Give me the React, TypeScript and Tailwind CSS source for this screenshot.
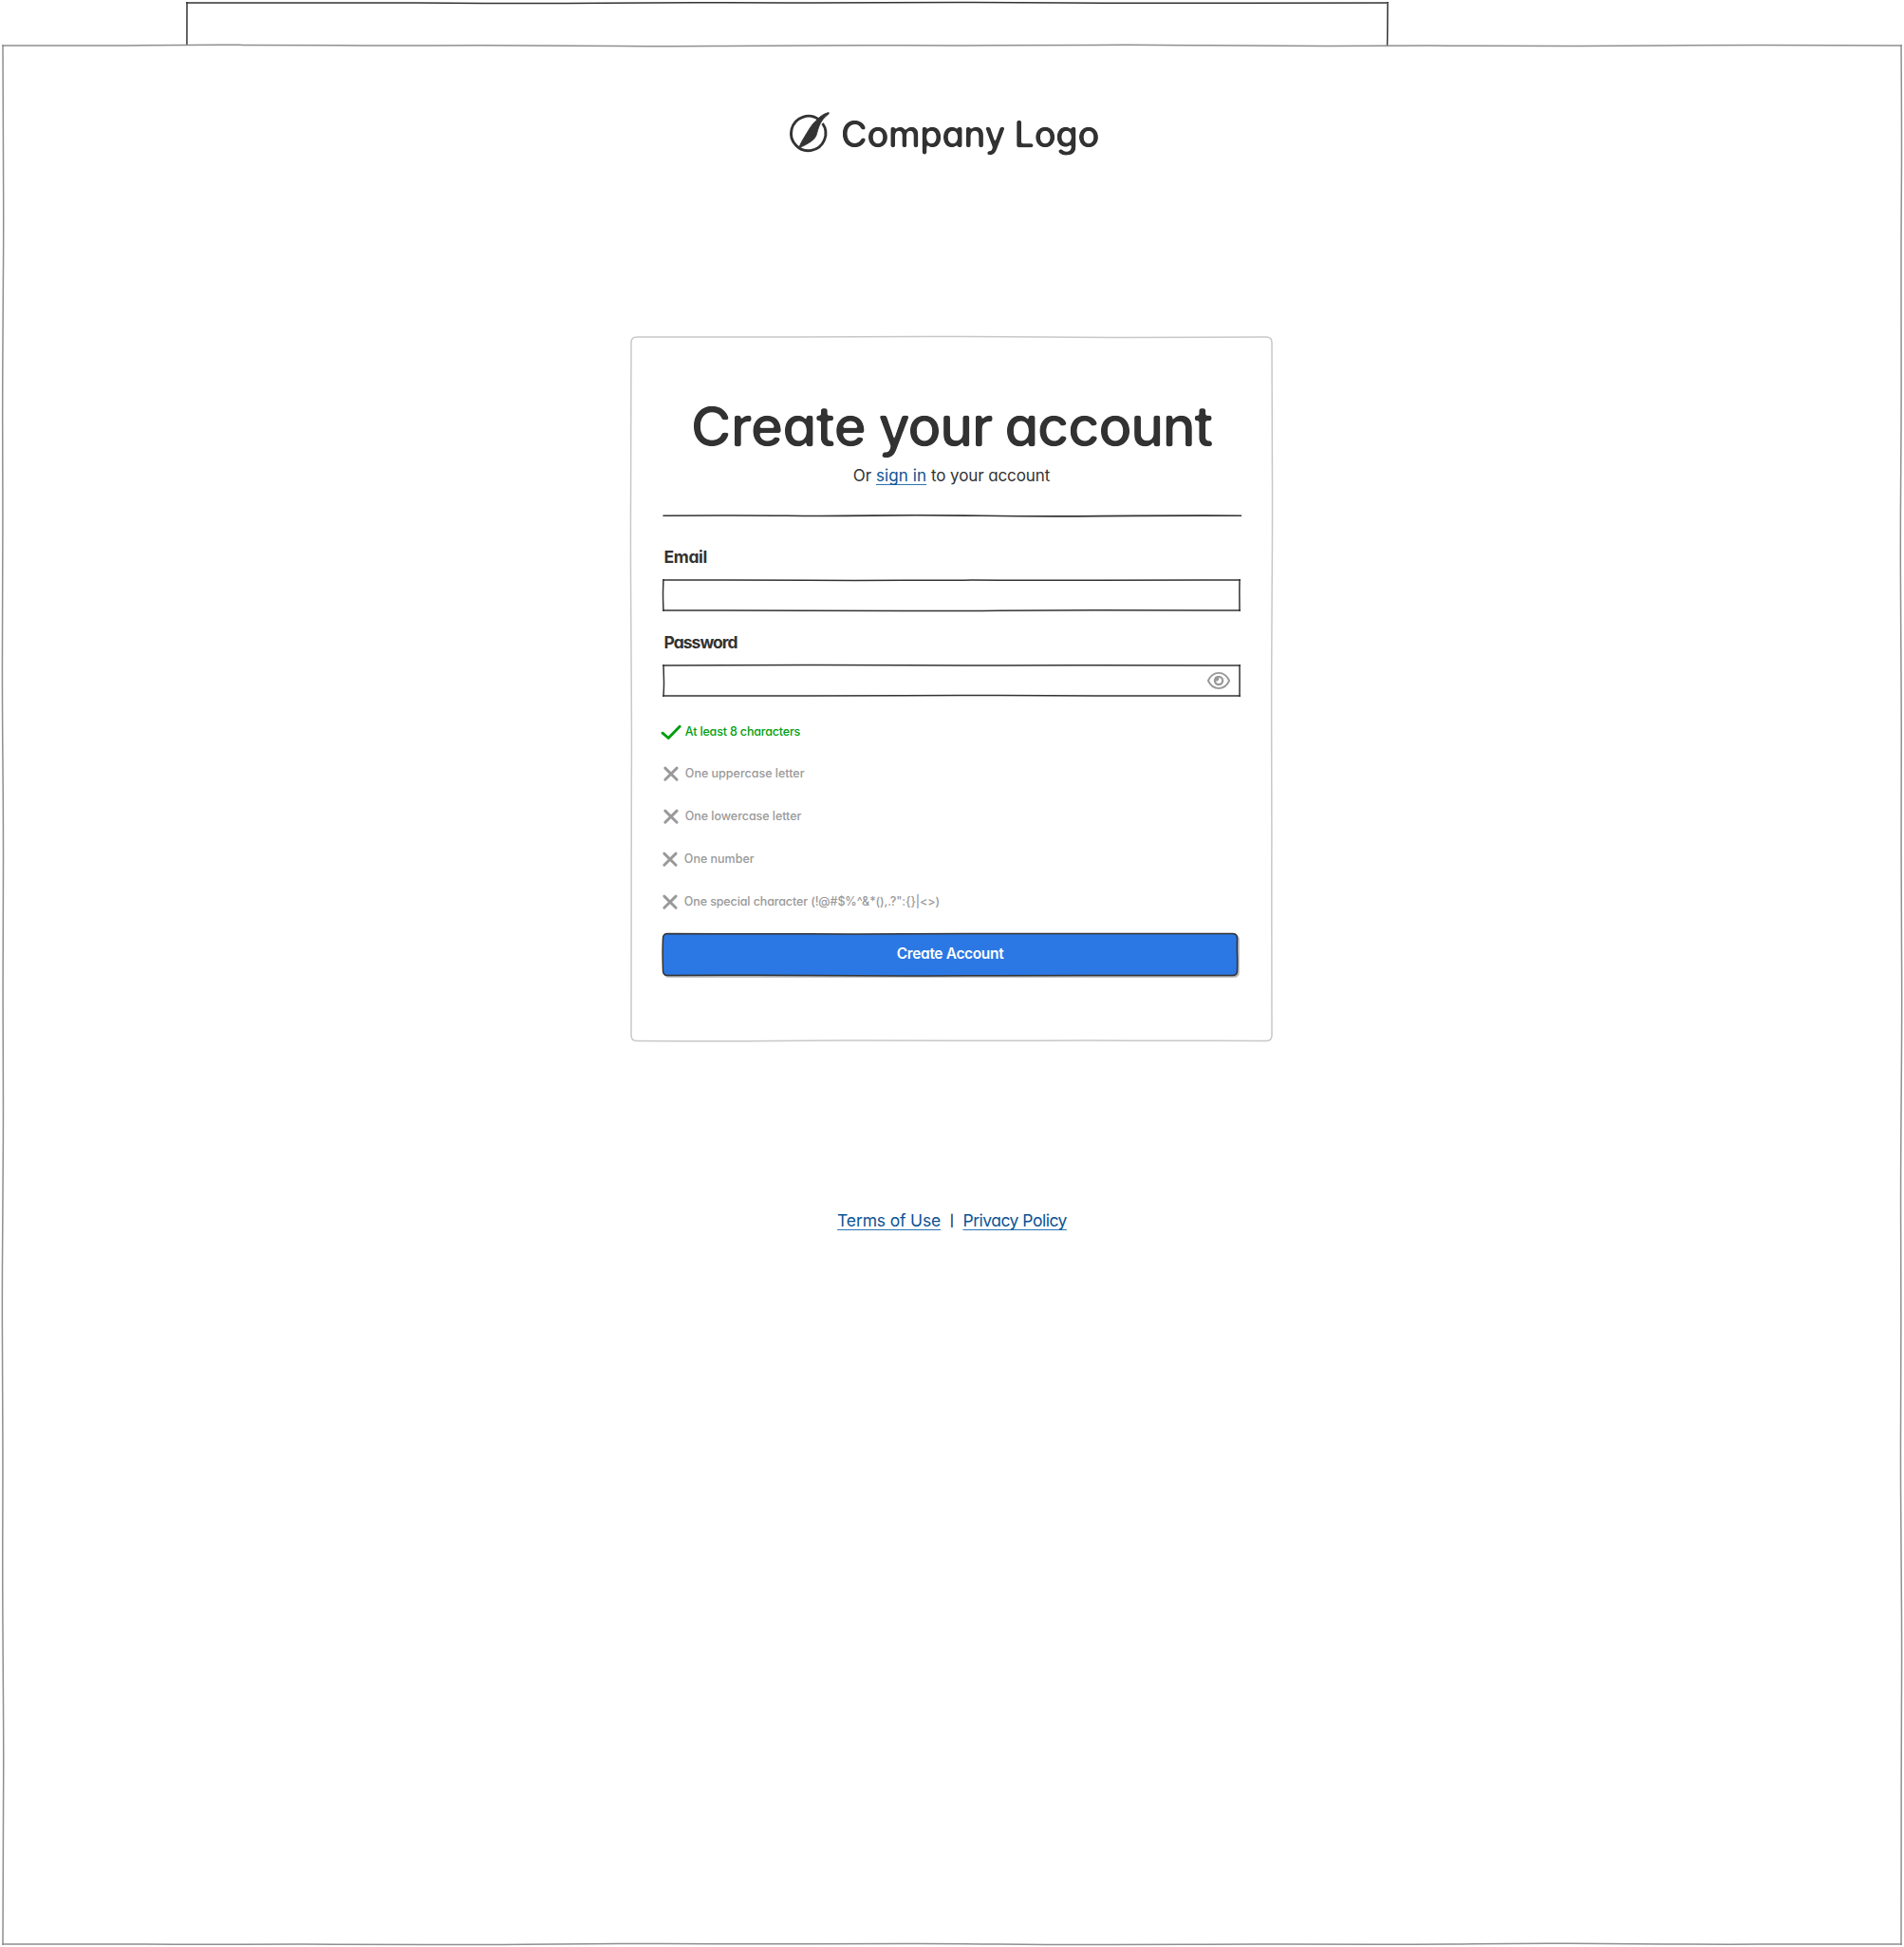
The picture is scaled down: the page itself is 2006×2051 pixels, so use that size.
import type { ReactNode } from "react";

type Point = [number, number];

/** Smooth curve through a list of points. */
function curve(points: Point[], move = true): string {
  let d = move ? `M${points[0][0]} ${points[0][1]}` : `L${points[0][0]} ${points[0][1]}`;
  for (let i = 1; i < points.length - 1; i++) {
    const [x, y] = points[i];
    const [nx, ny] = points[i + 1];
    const last = i === points.length - 2;
    const ex = last ? nx : (x + nx) / 2;
    const ey = last ? ny : (y + ny) / 2;
    d += ` Q${x.toFixed(2)} ${y.toFixed(2)} ${ex.toFixed(2)} ${ey.toFixed(2)}`;
  }
  return d;
}

/** Points of one pen stroke that drifts slightly off the straight line. */
function stroke(from: Point, to: Point, seed: number, amp: number): Point[] {
  const length = Math.hypot(to[0] - from[0], to[1] - from[1]);
  const steps = Math.max(3, Math.round(length / 100));
  const nx = -(to[1] - from[1]) / length;
  const ny = (to[0] - from[0]) / length;
  const points: Point[] = [];
  for (let i = 0; i <= steps; i++) {
    const t = i / steps;
    const ends = i === 0 || i === steps;
    const off = ends ? 0 : amp * Math.sin(seed * 2.3 + i * 1.35) * Math.cos(seed + i * 0.6);
    points.push([from[0] + (to[0] - from[0]) * t + nx * off, from[1] + (to[1] - from[1]) * t + ny * off]);
  }
  return points;
}

function SketchBox({
  width,
  height,
  seed,
  radius = 0,
  amp = 0.9,
  over = 1,
  fill = "none",
  className,
}: {
  width: number;
  height: number;
  seed: number;
  radius?: number;
  amp?: number;
  over?: number;
  fill?: string;
  className: string;
}) {
  const w = width;
  const h = height;
  const r = radius;
  let d: string;
  if (r > 0) {
    d =
      curve(stroke([r, 0], [w - r, 0], seed, amp)) +
      ` Q${w} 0 ${w} ${r} ` +
      curve(stroke([w, r], [w, h - r], seed + 1, amp), false) +
      ` Q${w} ${h} ${w - r} ${h} ` +
      curve(stroke([w - r, h], [r, h], seed + 2, amp), false) +
      ` Q0 ${h} 0 ${h - r} ` +
      curve(stroke([0, h - r], [0, r], seed + 3, amp), false) +
      ` Q0 0 ${r} 0 Z`;
  } else {
    d =
      curve(stroke([-over, 0], [w + over, 0], seed, amp)) +
      curve(stroke([w, -over], [w, h + over], seed + 1, amp)) +
      curve(stroke([w + over, h], [-over, h], seed + 2, amp)) +
      curve(stroke([0, h + over], [0, -over], seed + 3, amp));
  }
  return (
    <svg
      aria-hidden
      className={`pointer-events-none absolute left-0 top-0 overflow-visible ${className}`}
      width={w}
      height={h}
      fill={fill}
      strokeWidth={1.5}
    >
      <path d={d} />
    </svg>
  );
}

function LogoMark() {
  return (
    <svg className="h-[44px] w-[44px] shrink-0 overflow-visible" viewBox="0 0 44 44" fill="none">
      <path d="M31 9.2 A18.2 18.2 0 1 0 34.6 13" stroke="#333" strokeWidth="2.9" />
      <path
        d="M41.1 1.5 C35.5 2.7 31 6.3 27.2 10.7 C22.6 14.7 20 20.3 16 26.5 C13.3 30.8 11.2 34.8 9.6 39.1 C14.6 36.5 21.4 33.8 25.8 29.1 C29 25.6 28.6 21.8 30.6 16.9 C32.6 10.9 36.3 6.3 41.1 2.9 Z"
        fill="#333"
        stroke="#333"
        strokeWidth="0.9"
        strokeLinejoin="round"
      />
    </svg>
  );
}

function Eye() {
  return (
    <svg className="h-[20px] w-[26px]" viewBox="0 0 26 20" fill="none">
      <path
        d="M1.9 10 C4.2 5 8.2 1.9 13 1.9 C17.8 1.9 21.8 5 24.1 10 C21.8 15 17.8 18.1 13 18.1 C8.2 18.1 4.2 15 1.9 10 Z"
        stroke="#999"
        strokeWidth="1.9"
        strokeLinejoin="round"
      />
      <circle cx="13" cy="10" r="4.1" stroke="#999" strokeWidth="2.3" />
      <path d="M13.2 5.6 V9 C13.2 10 12.6 10.5 11.6 10.5 H9 V6 Z" fill="#999" />
      <circle cx="13.9" cy="9.4" r="1.9" fill="#fff" />
      <circle cx="11.9" cy="8.4" r="1.3" fill="#999" />
    </svg>
  );
}

function Check() {
  return (
    <svg className="h-[18px] w-[22px] overflow-visible" viewBox="0 0 22 18" fill="none">
      <path d="M-1 11.2 L5.2 16.5 L17.2 4.2" stroke="#009e0f" strokeWidth="2.9" strokeLinecap="round" strokeLinejoin="round" />
    </svg>
  );
}

function Cross() {
  return (
    <svg className="h-[18px] w-[22px] overflow-visible" viewBox="0 0 22 18" fill="none">
      <path d="M1.8 4.1 L14.1 16.2 M14.1 4.1 L1.8 16.2" stroke="#999" strokeWidth="2.9" strokeLinecap="round" />
    </svg>
  );
}

function Rule({
  met = false,
  height = "h-[45px]",
  className = "",
  children,
}: {
  met?: boolean;
  height?: string;
  className?: string;
  children: ReactNode;
}) {
  return (
    <li
      className={`flex items-start gap-[0.8px] text-[12.5px] font-medium leading-5 ${height} ${met ? "text-[#009e0f]" : "text-[#999]"} ${className}`}
    >
      {met ? <Check /> : <Cross />}
      <span className="whitespace-nowrap">{children}</span>
    </li>
  );
}

function Link({ className = "", children }: { className?: string; children: ReactNode }) {
  return (
    <a
      href="#"
      className={`text-[#0b5394] underline decoration-[#2a75b5] decoration-[1.3px] underline-offset-[2.5px] [text-decoration-skip-ink:none] ${className}`}
    >
      {children}
    </a>
  );
}

export default function App() {
  return (
    <div className="h-[2051px] w-[2006px] overflow-hidden bg-white pt-[3px] font-['Inter',sans-serif] text-[#333] [font-feature-settings:'cv11']">
      <svg aria-hidden className="absolute h-0 w-0">
        <filter id="soft-corners" x="-5%" y="-10%" width="110%" height="120%">
          <feGaussianBlur stdDeviation="1.3" />
          <feComponentTransfer>
            <feFuncA type="linear" slope="3.6" intercept="-1.05" />
          </feComponentTransfer>
        </filter>
      </svg>

      <div className="relative ml-[197px] h-[45px] w-[1265px]">
        <SketchBox width={1265} height={90} seed={4} amp={0.7} over={1} className="stroke-[#333]" />
      </div>

      <main className="relative ml-[3px] flex h-[2000px] w-[2000px] flex-col bg-white pt-[69px]">
        <SketchBox width={2000} height={2000} seed={2} amp={0.9} over={1} className="stroke-[#8f8f8f]" />

        <div className="ml-[829px] flex h-[45px] items-start">
          <LogoMark />
          <span className="ml-2.5 pt-1 text-[38px] font-medium leading-10 tracking-[-0.4px] [filter:url(#soft-corners)]">
            Company Logo
          </span>
        </div>

        <section className="relative ml-[662px] mt-[192.5px] h-[741.5px] w-[675px] pl-[34px] pt-[61px]">
          <SketchBox width={675} height={741.5} seed={7} radius={6} amp={0.8} className="stroke-[#c8c8c8]" />

          <h1 className="-ml-px w-[609px] whitespace-nowrap text-center text-[58px] font-medium leading-[66px] tracking-[-1.25px] [word-spacing:-1px] [filter:url(#soft-corners)]">
            <span className="tracking-[-0.45px]">Create</span> your account
          </h1>
          <p className="-ml-px mt-[7px] w-[609px] text-center text-[17px] leading-6">
            Or <Link className="tracking-[0.1px]">sign in</Link> <span className="tracking-[-0.1px]">to your account</span>
          </p>
          <svg aria-hidden className="mt-[28.5px] h-1 w-[609px] overflow-visible" fill="none">
            <path
              d={curve([[0, 2.2], [90, 1.8], [170, 2.8], [270, 1.4], [400, 3.2], [520, 2], [608.5, 2.2]])}
              className="stroke-[#333]"
              strokeWidth="1.6"
              strokeLinecap="round"
            />
          </svg>

          <form className="mt-[30px]" onSubmit={(e) => e.preventDefault()}>
            <label htmlFor="email" className="block pl-[0.5px] text-[17.5px] font-bold leading-6 tracking-[-0.35px]">
              Email
            </label>
            <div className="relative mt-3 h-8 w-[607px]">
              <SketchBox width={607} height={32} seed={9} amp={0.7} className="stroke-[#333]" />
              <input id="email" type="email" className="h-full w-full bg-transparent px-2 outline-none" />
            </div>

            <label htmlFor="password" className="mt-[22px] block pl-[0.5px] text-[17.5px] font-bold leading-6 tracking-[-0.98px]">
              Password
            </label>
            <div className="relative mt-3 flex h-8 w-[607px] items-center pr-[9px]">
              <SketchBox width={607} height={32} seed={12} amp={0.7} className="stroke-[#333]" />
              <input id="password" type="password" className="h-full min-w-0 flex-1 bg-transparent px-2 outline-none" />
              <Eye />
            </div>

            <ul className="h-[250px] pt-7">
              <Rule met height="h-[44px]" className="tracking-[-0.17px]">
                At least 8 characters
              </Rule>
              <Rule>One uppercase letter</Rule>
              <Rule className="tracking-[-0.05px]">One lowercase letter</Rule>
              <Rule className="-ml-px">One number</Rule>
              <Rule className="-ml-px tracking-[-0.11px]">{`One special character (!@#$%^&*(),.?":{}|<>)`}</Rule>
            </ul>

            <button
              type="submit"
              className="relative -ml-px block h-[45px] w-[606px] pb-0.5 text-center text-[15.5px] font-semibold leading-6 tracking-[-0.35px] text-white"
            >
              <SketchBox
                width={605}
                height={44}
                seed={5}
                radius={5}
                amp={0}
                fill="#b3b3b3"
                className="translate-x-[2px] translate-y-[2px] stroke-[#b3b3b3]"
              />
              <SketchBox width={605} height={44} seed={5} radius={5} amp={0.6} fill="#2b78e4" className="translate-x-[0.5px] translate-y-[0.5px] stroke-[#333]" />
              <span className="relative">Create Account</span>
            </button>
          </form>
        </section>

        <footer className="mt-[178px] flex items-center justify-center gap-[9.5px] text-[17.5px] leading-6">
          <Link className="tracking-[-0.15px]">Terms of Use</Link>
          <span className="text-[12px] font-semibold">|</span>
          <Link className="tracking-[-0.5px]">Privacy Policy</Link>
        </footer>
      </main>
    </div>
  );
}
